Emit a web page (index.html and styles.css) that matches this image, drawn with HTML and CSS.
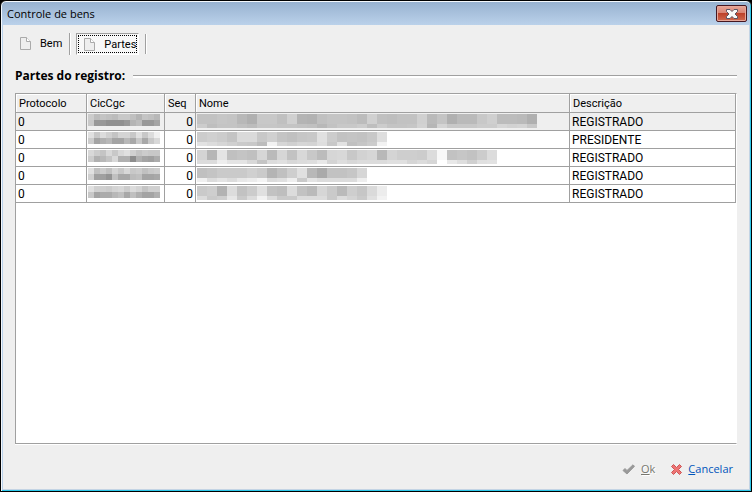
FILE: index.html
```html
<!DOCTYPE html>
<html lang="pt-BR">
<head>
    <meta charset="UTF-8">
    <meta name="viewport" content="width=device-width, initial-scale=1.0">
    <title>Controle de bens</title>
    <link rel="stylesheet" href="styles.css">
</head>
<body>
    <div class="window">
        <header class="titlebar">
            <h1>Controle de bens</h1>
            <button class="close" type="button" aria-label="Fechar">
                <svg width="12" height="10" viewBox="0 0 12 10">
                    <path d="M.5.5h3.500L6 2.500 8 .5h3.500v2L9 5l2.500 2.500v2H8l-2-2-2 2H.5v-2L3 5 .5 2.500z" fill="#f8f8f8" stroke="#5a5564"/>
                </svg>
            </button>
        </header>
        <main class="content">
            <nav class="tabs">
                <button class="tab" type="button">
                    <svg width="11" height="13" viewBox="0 0 11 13">
                        <path d="M.5.5h6l4 4v8H.5z" fill="#eee" stroke="#aaa"/>
                        <path d="M6.500.5v4h4" fill="#fff" stroke="#aaa"/>
                    </svg>
                    Bem
                </button>
                <button class="tab active" type="button">
                    <svg width="11" height="13" viewBox="0 0 11 13">
                        <path d="M.5.5h6l4 4v8H.5z" fill="#eee" stroke="#aaa"/>
                        <path d="M6.500.5v4h4" fill="#fff" stroke="#aaa"/>
                    </svg>
                    Partes
                </button>
            </nav>
            <h2 class="section-title">Partes do registro:</h2>
            <div class="grid-box">
                <table class="grid">
                    <colgroup>
                        <col class="col-protocolo">
                        <col class="col-cic">
                        <col class="col-seq">
                        <col>
                        <col class="col-descricao">
                    </colgroup>
                    <thead>
                        <tr><th>Protocolo</th><th>CicCgc</th><th>Seq</th><th>Nome</th><th>Descrição</th></tr>
                    </thead>
                    <tbody id="rows"></tbody>
                </table>
            </div>
            <footer class="actions">
                <button class="action" type="button" disabled>
                    <svg width="13" height="11" viewBox="0 0 13 11">
                        <path d="M1 6.500L3 4.500l2 2L11 .8 12.500 2.300 5 10z" fill="#999" stroke="#999" stroke-linejoin="round"/>
                    </svg>
                    <span><u>O</u>k</span>
                </button>
                <button class="action" type="button">
                    <svg width="11" height="11" viewBox="0 0 11 11">
                        <path d="M.5 2.500l2-2 3 3 3-3 2 2-3 3 3 3-2 2-3-3-3 3-2-2 3-3z" fill="#ee7474" stroke="#cc5555"/>
                    </svg>
                    <span><u>C</u>ancelar</span>
                </button>
            </footer>
        </main>
    </div>
    <script src="script.js"></script>
</body>
</html>
```
FILE: styles.css
```css
* {
    box-sizing: border-box;
}
body {
    margin: 0;
    background-color: #000;
    font-family: "Open Sans", "Noto Sans", sans-serif;
    font-size: 11px;
    color: #000;
}
button {
    margin: 0;
    padding: 0;
    border: none;
    background: none;
    font: inherit;
    color: inherit;
}
h1, h2 {
    margin: 0;
}

/* Window frame */
.window {
    display: flex;
    flex-direction: column;
    min-height: 100vh;
    border: 1px solid #000;
    border-radius: 6px 6px 0 0;
    background-color: #efefef;
    box-shadow: inset 1px 1px #f4f8fc, inset -1px -1px #2cc8ea, inset 2px 0 #b9d1ea, inset -2px -2px #c4d4e4;
}
.titlebar {
    display: flex;
    align-items: center;
    justify-content: space-between;
    height: 23px;
    margin: 1px 1px 0;
    padding: 0 3px 0 5px;
    border-radius: 4px 4px 0 0;
    background: linear-gradient(#98b2d0, #bad1ea);
}
.titlebar h1 {
    font-size: 11px;
    font-weight: 400;
}
.close {
    display: flex;
    align-items: center;
    justify-content: center;
    width: 31px;
    height: 17px;
    border: 1px solid #451721;
    border-radius: 2px;
    background: linear-gradient(#e8a597, #d98474 45%, #bd412a 50%, #d0694f);
    box-shadow: inset 0 0 0 1px #e6a799;
}
.content {
    flex: 1;
    display: flex;
    flex-direction: column;
    padding: 8px 14px 13px;
}

/* Tabs */
.tabs {
    display: flex;
    height: 22px;
    font-family: Roboto, sans-serif;
}
.tab {
    display: flex;
    align-items: center;
    gap: 9px;
    position: relative;
    margin-right: 14px;
    padding: 0 0 2px 5px;
}
.tab::after {
    content: "";
    position: absolute;
    top: 0;
    bottom: 0;
    right: -9px;
    border-left: 1px solid #a0a0a0;
    border-right: 1px solid #fff;
}
.tab.active {
    margin-right: 0;
    padding: 0 2px 0 7px;
    border: 1px solid #a0a0a0;
    border-right-color: #fff;
    border-bottom-color: #fff;
    background-color: #f8f8f8;
    outline: 1px dotted #000;
    outline-offset: -3px;
}

.section-title {
    display: flex;
    align-items: center;
    gap: 8px;
    margin: 12px 0 8px;
    font-size: 12px;
    font-weight: 700;
    line-height: 18px;
}
.section-title::after {
    content: "";
    flex: 1;
    height: 2px;
    border-top: 1px solid #a0a0a0;
    background-color: #fff;
}

/* Grid */
.grid-box {
    flex: 1;
    border: 1px solid #a0a0a0;
    border-right-color: #fff;
    box-shadow: 0 1px #fff;
    background-color: #fff;
    font-family: Roboto, sans-serif;
}
.grid {
    width: 100%;
    table-layout: fixed;
    border-collapse: separate;
    border-spacing: 0;
}
.col-protocolo {
    width: 71px;
}
.col-cic {
    width: 78px;
}
.col-seq {
    width: 31px;
}
.col-descricao {
    width: 166px;
}
.grid th {
    height: 19px;
    padding: 1px 3px 0;
    border-right: 1px solid #a0a0a0;
    border-bottom: 1px solid #a0a0a0;
    background-color: #efefef;
    box-shadow: inset 1px 1px #fff;
    font-weight: 400;
    text-align: left;
    line-height: 14px;
}
.grid td {
    height: 18px;
    padding: 0 2px;
    border-right: 1px solid #a0a0a0;
    border-bottom: 1px solid #a0a0a0;
    font-size: 12px;
    line-height: 16px;
}
.grid td.masked {
    padding: 1px 1px 0;
    vertical-align: top;
}
.grid td.seq {
    text-align: right;
}
.grid tr.selected td {
    background-color: #efefef;
}

/* Masked values, one line of blocks over another */
.mask-line {
    display: flex;
}
.mask-line i {
    width: 10px;
    height: 10px;
}
.mask-line + .mask-line i {
    height: 4px;
}
.cic .mask-line i,
.cic .mask-line + .mask-line i {
    width: 6px;
    height: 6px;
}

/* Bottom buttons */
.actions {
    display: flex;
    justify-content: flex-end;
    gap: 16px;
    padding: 16px 4px 0 0;
}
.action {
    display: flex;
    align-items: center;
    gap: 6px;
    color: #0055bb;
    line-height: 18px;
}
.action:disabled {
    color: #77776f;
    text-shadow: 1px 1px #fff;
}
```
FILE: script.js
```js
// Grey level of each block in hex, upper line then lower line
const rows = [
    {
        cic: ['cc bc c4 c0 bc c8 c8 c0 b4 c4 c0 b8', 'c8 98 98 90 90 90 98 b4 bc 98 98 a4'],
        nome: ['c2 c2 c6 c4 b8 b0 c8 c8 c0 d0 b4 b2 c0 c4 c4 c2 bc d0 c0 be c2 c2 d0 ba c4 b0 ba ba c8 cf bc bc ba b0',
               'cc be c4 c4 c0 bc c6 c6 c4 c4 c2 c0 b8 c2 c8 c8 cc be cc c4 c4 c6 d2 b6 d4 c8 c8 c8 cc cc d6 d2 d4 c8'],
        descricao: 'REGISTRADO'
    },
    {
        cic: ['e0 c8 dc d0 c4 d4 d4 c8 e0 c8 dc f0', 'cc a4 b0 b8 a4 a4 b8 a8 c8 a8 c8 d8'],
        nome: ['cc d0 cc c4 da da c8 d0 c4 c0 c6 c8 e0 cc c2 c4 c2 c8 de',
               'e2 dc d6 d0 ca c8 bc f2 d6 d0 d6 d4 de c8 e2 c0 c6 cc f2'],
        descricao: 'PRESIDENTE'
    },
    {
        cic: ['d8 cc c4 d8 c8 d8 e0 d0 c4 cc c8 c8', 'cc b0 b8 c4 d8 b0 b0 8c b0 a4 a0 ac'],
        nome: ['d4 b6 e4 c0 c4 c0 d6 ba d6 c2 d8 c8 bc d6 d8 c8 d2 d6 b8 d4 ce ce cc dc f8 c2 c6 c2 cc dc',
               'dc dc ee e4 e4 d8 c4 dc e0 d8 dc de e8 d4 de d8 dc dc dc e0 e0 d6 dc d6 ff e8 de d0 e0 e2'],
        descricao: 'REGISTRADO'
    },
    {
        cic: ['e0 c0 cc c0 d4 c8 d8 c8 cc c0 c8 cc', 'd0 a0 a0 94 c0 a8 a8 bc c0 a4 a4 a8'],
        nome: ['c0 c4 ca ca ca d0 ca b4 c0 ce e0 b8 aa c2 c2 c6 d6',
               'f0 dc e4 dc e8 ec f4 dc e0 ee ca e4 dc dc dc dc ee'],
        descricao: 'REGISTRADO'
    },
    {
        cic: ['e0 d0 d0 cc d4 d8 cc dc d4 c4 d0 d0', 'c8 a4 ac ac b8 c0 a8 c0 b0 a4 a4 b0'],
        nome: ['ca ce b2 dc c2 cc e0 c2 be dc c2 ba d6 ca ba ce c6 da ec',
               'dc ca ce e6 ca dc f2 dc ca ca dc dc dc ca dc d4 ca e0 f2'],
        descricao: 'REGISTRADO'
    }
];

function mask(lines) {
    return lines.map(line =>
        '<div class="mask-line">' +
        line.split(' ').map(v => `<i style="background:#${v}${v}${v}"></i>`).join('') +
        '</div>'
    ).join('');
}

document.getElementById('rows').innerHTML = rows.map((row, i) => `
    <tr class="${i === 0 ? 'selected' : ''}">
        <td>0</td>
        <td class="masked cic">${mask(row.cic)}</td>
        <td class="seq">0</td>
        <td class="masked">${mask(row.nome)}</td>
        <td>${row.descricao}</td>
    </tr>`).join('');
```
